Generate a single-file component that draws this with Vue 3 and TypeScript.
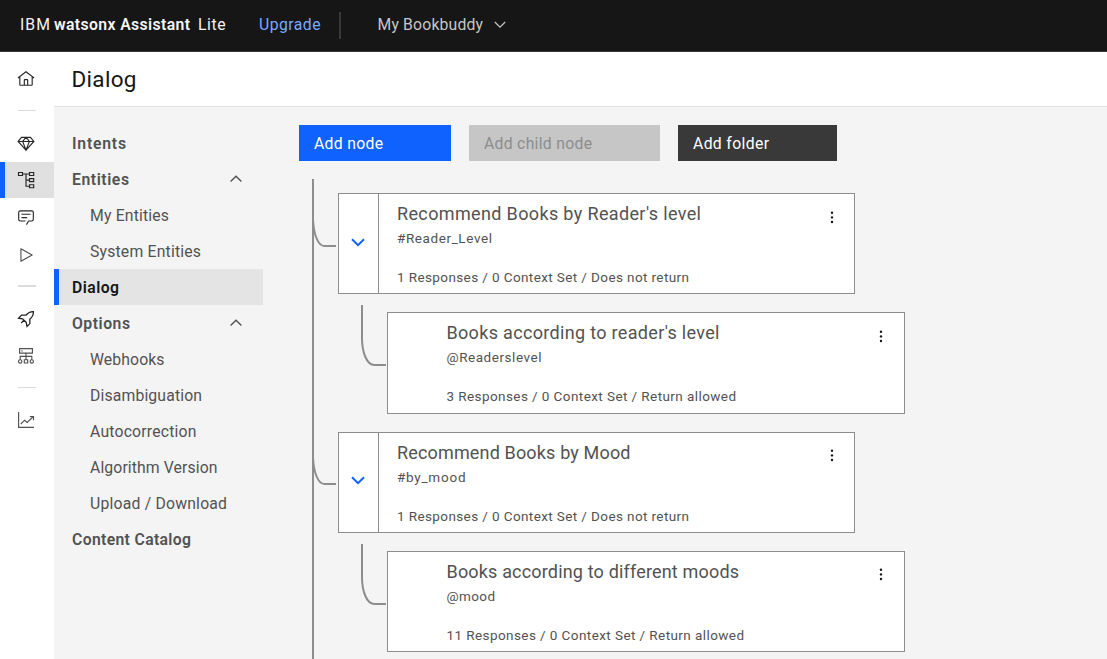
<script setup lang="ts">
import type { Directive } from 'vue'

interface NavItem {
  label: string
  width: number
  child?: boolean
  open?: boolean
  active?: boolean
}

interface DialogNode {
  title: string
  titleWidth: number
  condition: string
  conditionWidth: number
  summary: string
  summaryWidth: number
  child?: boolean
  tall?: boolean
}

// Tracks a label out (or in) so that it takes up its designed width.
const vFit: Directive<HTMLElement, number> = {
  mounted(el, binding) {
    const natural = el.getBoundingClientRect().width
    const gaps = (el.textContent ?? '').length - 1
    el.style.letterSpacing = `${((binding.value - natural) / gaps).toFixed(3)}px`
  },
}

const nav: NavItem[] = [
  { label: 'Intents', width: 54 },
  { label: 'Entities', width: 57, open: true },
  { label: 'My Entities', width: 79, child: true },
  { label: 'System Entities', width: 111, child: true },
  { label: 'Dialog', width: 47, active: true },
  { label: 'Options', width: 58, open: true },
  { label: 'Webhooks', width: 74.5, child: true },
  { label: 'Disambiguation', width: 112, child: true },
  { label: 'Autocorrection', width: 106.5, child: true },
  { label: 'Algorithm Version', width: 127.5, child: true },
  { label: 'Upload / Download', width: 137, child: true },
  { label: 'Content Catalog', width: 119 },
]

const nodes: DialogNode[] = [
  {
    title: "Recommend Books by Reader's level", titleWidth: 304,
    condition: '#Reader_Level', conditionWidth: 95,
    summary: '1 Responses / 0 Context Set / Does not return', summaryWidth: 292,
  },
  {
    title: "Books according to reader's level", titleWidth: 273,
    condition: '@Readerslevel', conditionWidth: 95,
    summary: '3 Responses / 0 Context Set / Return allowed', summaryWidth: 289.5,
    child: true, tall: true,
  },
  {
    title: 'Recommend Books by Mood', titleWidth: 233.5,
    condition: '#by_mood', conditionWidth: 68.5,
    summary: '1 Responses / 0 Context Set / Does not return', summaryWidth: 292,
  },
  {
    title: 'Books according to different moods', titleWidth: 292.5,
    condition: '@mood', conditionWidth: 48.5,
    summary: '11 Responses / 0 Context Set / Return allowed', summaryWidth: 297.5,
    child: true,
  },
]
</script>

<template>
  <div class="app">
    <header class="topbar">
      <span class="brand"><span v-fit="30">IBM</span></span>
      <b class="product"><span v-fit="136">watsonx Assistant</span></b>
      <span class="plan"><span v-fit="27.5">Lite</span></span>
      <a class="upgrade"><span v-fit="61.5">Upgrade</span></a>
      <i class="rule"></i>
      <span class="assistant"><span v-fit="105.5">My Bookbuddy</span></span>
      <svg class="caret" width="12" height="8" viewBox="0 0 12 8"><path d="M.8 1 6 6.2 11.2 1" /></svg>
    </header>

    <div class="body">
      <aside class="rail">
        <div class="cell home">
          <svg viewBox="0 0 32 32" class="solid"><path d="M16.6123,2.2138a1.01,1.01,0,0,0-1.2427,0L1,13.4194l1.2427,1.5717L4,13.6208V26a2.0041,2.0041,0,0,0,2,2H26a2.0037,2.0037,0,0,0,2-2V13.63L29.7573,15,31,13.4282ZM18,26H14V18h4Zm2,0V18a2.0023,2.0023,0,0,0-2-2H14a2.002,2.002,0,0,0-2,2v8H6V12.0615l10-7.79,10,7.8005V26Z" /></svg>
        </div>
        <i class="sep first"></i>
        <div class="cell">
          <svg viewBox="0 0 32 32" class="line gem"><path d="M8 4.2H24L30 11.5 16 27 2 11.5ZM2 11.5H30M16 4.2 10 11.5 16 27 22 11.5Z" /></svg>
        </div>
        <div class="cell current">
          <svg viewBox="0 0 18 18" class="line"><path d="M1.5 1.5H5.5V4.5H1.5ZM12.5 1.5H16.7V4.5H12.5ZM12.5 7.6H16.7V10.6H12.5ZM12.5 13.7H16.7V16.7H12.5ZM5.5 3H12.5M9 3V15.2H12.5M9 9.1H12.5" /></svg>
        </div>
        <div class="cell chat">
          <svg viewBox="0 0 32 32" class="solid"><path d="M17.74,30,16,29l4-7h6a2,2,0,0,0,2-2V8a2,2,0,0,0-2-2H6A2,2,0,0,0,4,8V20a2,2,0,0,0,2,2h9v2H6a4,4,0,0,1-4-4V8A4,4,0,0,1,6,4H26a4,4,0,0,1,4,4V20a4,4,0,0,1-4,4H21.16ZM8 10H24V12H8ZM8 16H18V18H8Z" /></svg>
        </div>
        <div class="cell play">
          <svg viewBox="0 0 32 32" class="solid soft"><path d="M7,28a1,1,0,0,1-1-1V5a1,1,0,0,1,1.4819-.8763l20,11a1,1,0,0,1,0,1.7525l-20,11A1.0005,1.0005,0,0,1,7,28ZM8,6.6909V25.3088L24.9248,16Z" /></svg>
        </div>
        <i class="sep second"></i>
        <div class="cell">
          <svg viewBox="0 0 18 18" class="line rocket"><path d="M16.4 1.6C13.2 1.4 11 2.7 8.8 5.2L4.5 5.1 1.5 8.2 5.6 8.9 9.2 12.4 10 16.5 12.9 13.6 12.8 9.2C15.4 7 16.6 4.8 16.4 1.6ZM4.2 13 7.4 9.8" /></svg>
        </div>
        <div class="cell server">
          <svg viewBox="0 0 18 18" class="line soft"><path d="M2.6 1.6H15.4V6.1H2.6ZM4.4 3.8H5.6M9 6.1V12.7M3.2 12.7V9.3H14.8V12.7M7.3 12.7H10.7V16H7.3Z" /><circle cx="3.2" cy="14.4" r="1.7" /><circle cx="14.8" cy="14.4" r="1.7" /></svg>
        </div>
        <i class="sep third"></i>
        <div class="cell">
          <svg viewBox="0 0 18 18" class="line soft"><path d="M1.6 1V16.4H17M3.8 13 7.6 9.2 10.2 11.5 16.2 5.5M12.8 5.5H16.5V9.2" /></svg>
        </div>
      </aside>

      <main class="page">
        <div class="heading"><h1 v-fit="65">Dialog</h1></div>
        <div class="content">
          <nav class="sidenav">
            <div v-for="item in nav" :key="item.label" class="item" :class="{ child: item.child, active: item.active }">
              <span v-fit="item.width">{{ item.label }}</span>
              <svg v-if="item.open" width="12" height="8" viewBox="0 0 12 8"><path d="M.6 6.6 6 1.2 11.4 6.6" /></svg>
            </div>
          </nav>

          <section class="workspace">
            <div class="actions">
              <button class="primary"><span v-fit="69">Add node</span></button>
              <button class="disabled" disabled><span v-fit="108">Add child node</span></button>
              <button class="secondary"><span v-fit="76">Add folder</span></button>
            </div>

            <div class="tree">
              <article v-for="node in nodes" :key="node.title" class="card" :class="{ nested: node.child, tall: node.tall }">
                <svg v-if="node.child" class="link" width="28" height="64" viewBox="0 0 28 64"><path d="M2 0V33C2 47 6.5 60 14.5 60H26" /></svg>
                <svg v-else class="link" width="28" height="64" viewBox="0 0 28 64"><path d="M2 33C2.5 47 6.5 60 13.5 60H25" /></svg>
                <div class="toggle">
                  <svg v-if="!node.child" width="14" height="9" viewBox="0 0 14 9"><path d="M1 1.2 7 7.2 13 1.2" /></svg>
                </div>
                <div class="text">
                  <h2><span v-fit="node.titleWidth">{{ node.title }}</span></h2>
                  <p><span v-fit="node.conditionWidth">{{ node.condition }}</span></p>
                  <p class="summary"><span v-fit="node.summaryWidth">{{ node.summary }}</span></p>
                </div>
                <svg class="more" width="4" height="13" viewBox="0 0 4 13"><circle cx="2" cy="1.8" r="1.2" /><circle cx="2" cy="6.4" r="1.2" /><circle cx="2" cy="11" r="1.2" /></svg>
              </article>
            </div>
          </section>
        </div>
      </main>
    </div>
  </div>
</template>

<style>
body { margin: 0; overflow: hidden; }
</style>

<style scoped>
.app {
  width: 1107px;
  height: 659px;
  display: flex;
  flex-direction: column;
  overflow: hidden;
  background: #f4f4f4;
  color: #525252;
  font-family: Roboto, "Liberation Sans", sans-serif;
  font-size: 15.75px;
}
.app span, .app h1 { white-space: nowrap; }
.app span, .app b { display: inline-block; }
svg { display: block; flex: none; fill: none; overflow: visible; }

.topbar {
  height: 51px;
  flex: none;
  display: flex;
  align-items: center;
  padding-left: 20px;
  padding-bottom: 2px;
  box-sizing: border-box;
  background: #161616;
  color: #f4f4f4;
  box-shadow: 0 1px #393939;
  margin-bottom: 1px;
}
.brand { width: 34px; }
.product { width: 144px; font-weight: 600; }
.plan { width: 61px; }
.upgrade { width: 80px; color: #78a9ff; }
.rule { width: 2px; height: 27px; margin-top: 1px; background: #393939; }
.assistant { margin-left: 36.5px; width: 116.5px; color: #c6c6c6; }
.caret { stroke: #c6c6c6; stroke-width: 1.2; margin-top: 1px; }

.body { flex: 1; min-height: 0; display: flex; }
.rail { width: 54px; flex: none; background: #fff; }
.cell { height: 36px; display: flex; align-items: center; justify-content: center; box-sizing: border-box; }
.cell svg { width: 18px; height: 18px; margin-left: -2px; }
.home { margin-top: 9px; }
.chat { margin-top: 1px; }
.play { margin-top: 2px; }
.server { margin-top: 1px; }
.current { background: #e0e0e0; border-left: 5px solid #0f62fe; padding-right: 5px; }
.solid { fill: #262626; }
.solid.soft { fill: #525252; }
.line { stroke: #262626; stroke-width: 1.15; }
.line.soft { stroke: #525252; }
.line.gem { stroke-width: 2; }
.line.rocket { stroke-width: 1.3; }
.sep { display: block; width: 18px; margin-left: 18px; height: 1px; background: #dcdcdc; }
.first { margin-top: 13px; margin-bottom: 15px; }
.second { height: 2px; margin-top: 12px; margin-bottom: 14px; }
.third { margin-top: 13px; margin-bottom: 14px; }

.page { flex: 1; min-width: 0; display: flex; flex-direction: column; }
.heading { height: 55px; flex: none; box-sizing: border-box; background: #fff; border-bottom: 1px solid #e0e0e0; padding-left: 17.5px; display: flex; align-items: center; }
h1 { margin: 0; font-size: 22.5px; font-weight: 400; color: #161616; }
.content { flex: 1; min-height: 0; display: flex; }

.sidenav { width: 209px; flex: none; padding-top: 18px; }
.item { height: 36px; display: flex; align-items: center; justify-content: space-between; box-sizing: border-box; padding: 1px 21px 0 18px; font-weight: 600; }
.item svg { stroke: #525252; stroke-width: 1.4; margin-top: -1px; }
.item.child { padding-left: 36px; font-weight: 400; }
.item.active { background: #e4e4e4; border-left: 5px solid #0f62fe; padding-left: 13px; color: #161616; }

.workspace { margin-left: 36px; padding-top: 18px; }
.actions { display: flex; gap: 18px; }
button { height: 36px; border: 0; padding: 1px 0 0 15px; font: inherit; text-align: left; color: #fff; }
.primary { width: 152px; background: #0f62fe; }
.disabled { width: 191px; background: #c6c6c6; color: #8d8d8d; }
.secondary { width: 159px; background: #393939; }

.tree { margin: 18px 0 0 13px; border-left: 2px solid #8d8d8d; height: 480px; padding: 14px 0 0 24px; box-sizing: border-box; }
.card { position: relative; width: 517px; height: 101px; margin-bottom: 18px; box-sizing: border-box; display: flex; background: #fff; border: 1px solid #8d8d8d; }
.nested { width: 518px; margin-left: 49px; }
.tall { height: 102px; }
.toggle { width: 39px; flex: none; border-right: 1px solid #8d8d8d; display: flex; align-items: center; justify-content: center; }
.nested .toggle { width: 40px; border: 0; }
.toggle svg { stroke: #0f62fe; stroke-width: 2; margin: -2px 1px 0 0; }
.text { padding-left: 18px; padding-top: 9px; }
.nested .text { padding-left: 18.5px; }
h2 { margin: 0; height: 22px; line-height: 22px; font-size: 18px; font-weight: 400; }
p { margin: 4px 0 0; height: 18px; line-height: 18px; font-size: 13.5px; }
.summary { margin-top: 21px; }
.more { position: absolute; right: 20px; top: 17px; fill: #161616; }
.nested .more { right: 21px; }
.link { position: absolute; left: -28px; top: -8px; stroke: #8d8d8d; stroke-width: 2; }

.card:nth-child(n + 3) .more { top: 16px; }
.card:nth-child(3) .link { top: -9px; }
.card:nth-child(3) .toggle svg { margin-top: -4px; }
</style>
